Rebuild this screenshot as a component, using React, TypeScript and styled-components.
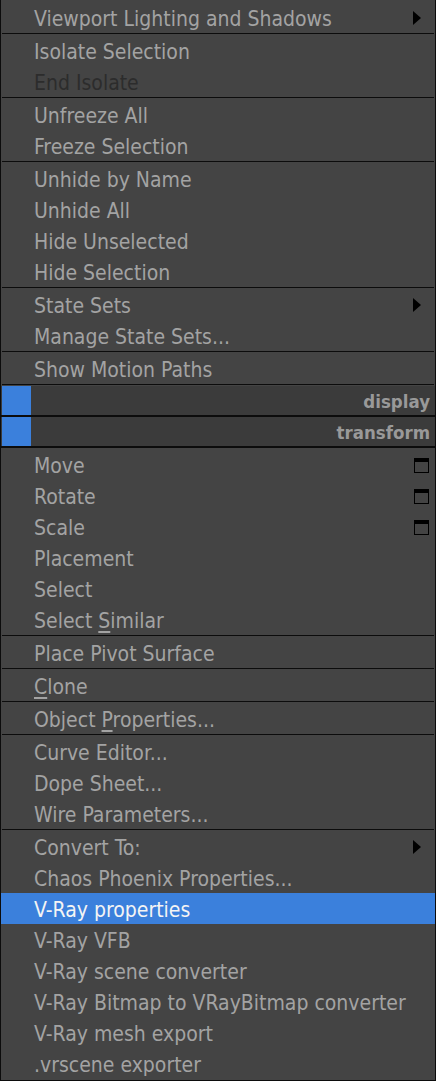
import React from 'react';
import styled, { createGlobalStyle } from 'styled-components';

const colors = {
  bg: '#444444',
  headerBg: '#3b3b3b',
  text: '#a3a3a3',
  disabled: '#2c2c2c',
  line: '#0c0c0c',
  blue: '#3b80dc',
  white: '#f4f4f4',
};

const GlobalStyle = createGlobalStyle`
  html, body {
    margin: 0;
    padding: 0;
    background: ${colors.bg};
  }
  body {
    font-family: "DejaVu Sans Condensed", "DejaVu Sans", Tahoma, sans-serif;
    font-stretch: condensed;
  }
`;

const Menu = styled.div`
  width: 436px;
  height: 1081px;
  box-sizing: border-box;
  display: flex;
  flex-direction: column;
  padding-top: 2px;
  background: ${colors.bg};
  border: 1px solid ${colors.line};
  border-top: none;
`;

const Item = styled.div<{ $disabled?: boolean; $active?: boolean }>`
  height: 31px;
  box-sizing: border-box;
  flex: none;
  display: flex;
  align-items: center;
  justify-content: space-between;
  padding: 3px 6px 0 33px;
  font-size: 21px;
  color: ${(p) => (p.$active ? colors.white : p.$disabled ? colors.disabled : colors.text)};
  background: ${(p) => (p.$active ? colors.blue : 'transparent')};
  white-space: nowrap;
`;

const Label = styled.span`
  line-height: 28px;
`;

const Accel = styled.span`
  text-decoration: underline;
  text-underline-offset: 3px;
`;

const SubArrow = styled.span`
  width: 0;
  height: 0;
  margin: 0 8px 3px 0;
  border-top: 7.5px solid transparent;
  border-bottom: 7.5px solid transparent;
  border-left: 8px solid #000;
`;

const OptionBox = styled.span`
  width: 15px;
  height: 15px;
  box-sizing: border-box;
  margin-bottom: 2px;
  border: 1px solid #000;
  border-top-width: 4px;
`;

const Separator = styled.div`
  height: 2px;
  flex: none;
  margin: 0 1px;
  border-top: 1px solid ${colors.line};
  box-sizing: border-box;
`;

const Header = styled.div<{ $last?: boolean }>`
  height: 31px;
  box-sizing: border-box;
  flex: none;
  display: flex;
  align-items: center;
  background: ${colors.headerBg};
  border-bottom: 2px solid ${colors.line};
  margin-bottom: ${(p) => (p.$last ? '1px' : '0')};
  padding-left: 1px;
  padding-right: 5px;
`;

const Swatch = styled.span`
  width: 29px;
  height: 29px;
  background: ${colors.blue};
`;

const HeaderTitle = styled.span`
  margin-left: auto;
  padding-top: 2px;
  font-size: 18.5px;
  font-weight: bold;
  color: #999999;
`;

type Entry = {
  label: React.ReactNode;
  sub?: boolean;
  option?: boolean;
  disabled?: boolean;
  active?: boolean;
};

const topGroups: Entry[][] = [
  [{ label: 'Viewport Lighting and Shadows', sub: true }],
  [{ label: 'Isolate Selection' }, { label: 'End Isolate', disabled: true }],
  [{ label: 'Unfreeze All' }, { label: 'Freeze Selection' }],
  [
    { label: 'Unhide by Name' },
    { label: 'Unhide All' },
    { label: 'Hide Unselected' },
    { label: 'Hide Selection' },
  ],
  [{ label: 'State Sets', sub: true }, { label: 'Manage State Sets...' }],
  [{ label: 'Show Motion Paths' }],
];

const bottomGroups: Entry[][] = [
  [
    { label: 'Move', option: true },
    { label: 'Rotate', option: true },
    { label: 'Scale', option: true },
    { label: 'Placement' },
    { label: 'Select' },
    { label: <>Select <Accel>S</Accel>imilar</> },
  ],
  [{ label: 'Place Pivot Surface' }],
  [{ label: <><Accel>C</Accel>lone</> }],
  [{ label: <>Object <Accel>P</Accel>roperties...</> }],
  [{ label: 'Curve Editor...' }, { label: 'Dope Sheet...' }, { label: 'Wire Parameters...' }],
  [
    { label: 'Convert To:', sub: true },
    { label: 'Chaos Phoenix Properties...' },
    { label: 'V-Ray properties', active: true },
    { label: 'V-Ray VFB' },
    { label: 'V-Ray scene converter' },
    { label: 'V-Ray Bitmap to VRayBitmap converter' },
    { label: 'V-Ray mesh export' },
    { label: '.vrscene exporter' },
  ],
];

const Group: React.FC<{ items: Entry[] }> = ({ items }) => (
  <>
    {items.map((it, i) => (
      <Item key={i} $disabled={it.disabled} $active={it.active}>
        <Label>{it.label}</Label>
        {it.sub && <SubArrow />}
        {it.option && <OptionBox />}
      </Item>
    ))}
  </>
);

export default function App() {
  return (
    <>
      <GlobalStyle />
      <Menu>
        {topGroups.map((g, i) => (
          <React.Fragment key={i}>
            <Group items={g} />
            <Separator />
          </React.Fragment>
        ))}
        <Header>
          <Swatch />
          <HeaderTitle>display</HeaderTitle>
        </Header>
        <Header $last>
          <Swatch />
          <HeaderTitle>transform</HeaderTitle>
        </Header>
        {bottomGroups.map((g, i) => (
          <React.Fragment key={i}>
            {i > 0 && <Separator />}
            <Group items={g} />
          </React.Fragment>
        ))}
      </Menu>
    </>
  );
}
